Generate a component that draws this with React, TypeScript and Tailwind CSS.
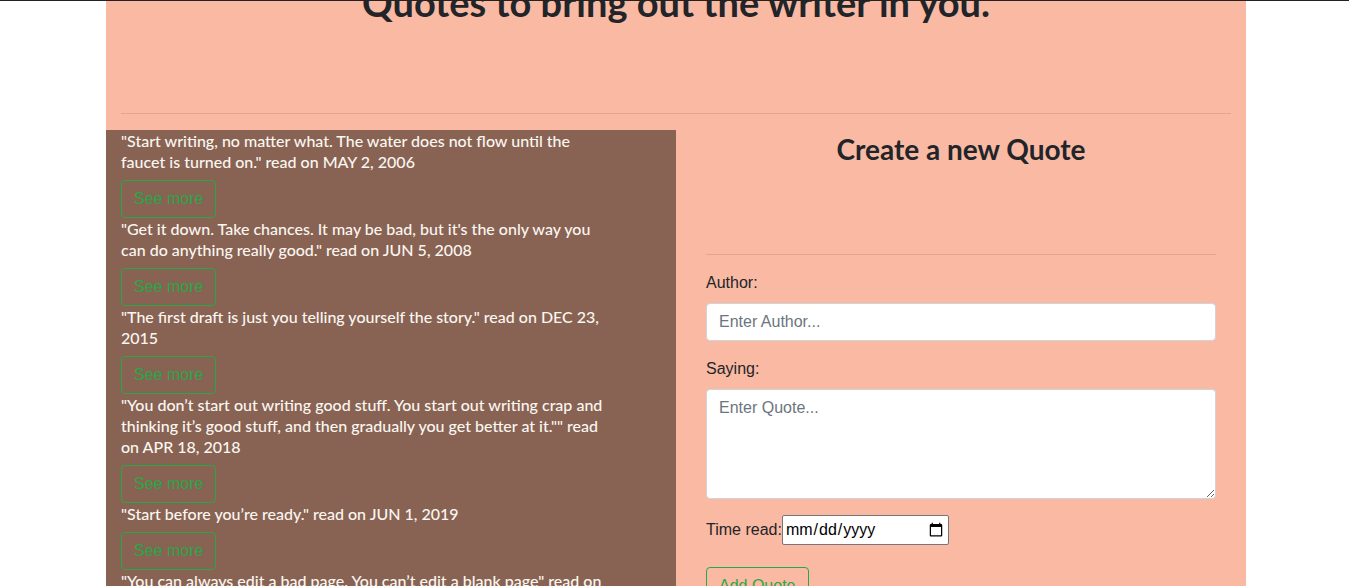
import React from "react";

const quotes: string[][] = [
  [
    "\"Start writing, no matter what. The water does not flow until the",
    "faucet is turned on.\" read on MAY 2, 2006",
  ],
  [
    "\"Get it down. Take chances. It may be bad, but it's the only way you",
    "can do anything really good.\" read on JUN 5, 2008",
  ],
  [
    "\"The first draft is just you telling yourself the story.\" read on DEC 23,",
    "2015",
  ],
  [
    "\"You don\u2019t start out writing good stuff. You start out writing crap and",
    "thinking it\u2019s good stuff, and then gradually you get better at it.\"\" read",
    "on APR 18, 2018",
  ],
  ["\"Start before you\u2019re ready.\" read on JUN 1, 2019"],
  [
    "\"You can always edit a bad page. You can\u2019t edit a blank page\" read on",
    "JUL 14, 2020",
  ],
];

const btn =
  "border border-[#28a745] text-[#28a745] rounded-[4px] px-3 py-1.5 text-base leading-6 bg-transparent font-['Liberation_Sans',Arial,sans-serif]";

export default function App() {
  return (
    <div className="relative h-[586px] overflow-hidden bg-white">
      <div className="absolute top-0 left-0 right-0 h-px bg-[#222222] z-10" />
      <div className="ml-[106px] w-[1140px] bg-[#fab9a3] -mt-[22px] min-h-[700px] font-['Lato','Noto_Sans',sans-serif]">
        <h1 className="text-center text-[38px] leading-[48px] font-bold text-[#212529]">
          Quotes to bring out the writer in you.
        </h1>
        <hr className="mx-[15px] mt-[87px] mb-4 border-0 border-t border-black/10" />
        <div className="flex">
          <div className="w-[570px] bg-[#886354] pl-[15px] pr-[15px] pb-10 text-[#fbf6f0]">
            {quotes.map((q, i) => (
              <div key={i}>
                <p className="text-base leading-[21px] font-medium whitespace-nowrap">
                  {q.map((line, j) => (
                    <React.Fragment key={j}>
                      {line}
                      {j < q.length - 1 && <br />}
                    </React.Fragment>
                  ))}
                </p>
                <button className={`mt-2 ${btn}`}>See more</button>
              </div>
            ))}
          </div>
          <div className="w-[570px] px-[30px]">
            <h2 className="text-center text-[28px] leading-[38px] font-bold text-[#212529]">
              Create a new Quote
            </h2>
            <hr className="mt-[86px] mb-4 border-0 border-t border-black/10" />
            <form className="font-['Liberation_Sans',Arial,sans-serif] text-base text-[#212529]">
              <div className="mb-4">
                <label className="block mb-2 leading-6">Author:</label>
                <input
                  type="text"
                  placeholder="Enter Author..."
                  className="block w-full h-[38px] px-3 py-1.5 bg-white border border-[#ced4da] rounded-[4px] leading-6 placeholder:text-[#6c757d] outline-none"
                />
              </div>
              <div className="mb-4">
                <label className="block mb-2 leading-6">Saying:</label>
                <textarea
                  rows={4}
                  placeholder="Enter Quote..."
                  className="block w-full h-[110px] px-3 py-1.5 bg-white border border-[#ced4da] rounded-[4px] leading-6 placeholder:text-[#6c757d] outline-none"
                />
              </div>
              <div className="flex items-center h-[30px] mb-[22px]">
                <label className="leading-6">Time read:</label>
                <input
                  type="date"
                  className="h-[30px] w-[167px] bg-white border border-[#767676] rounded-[2px] px-[2px] text-base text-black"
                />
              </div>
              <button type="button" className={btn}>
                Add Quote
              </button>
            </form>
          </div>
        </div>
      </div>
    </div>
  );
}
